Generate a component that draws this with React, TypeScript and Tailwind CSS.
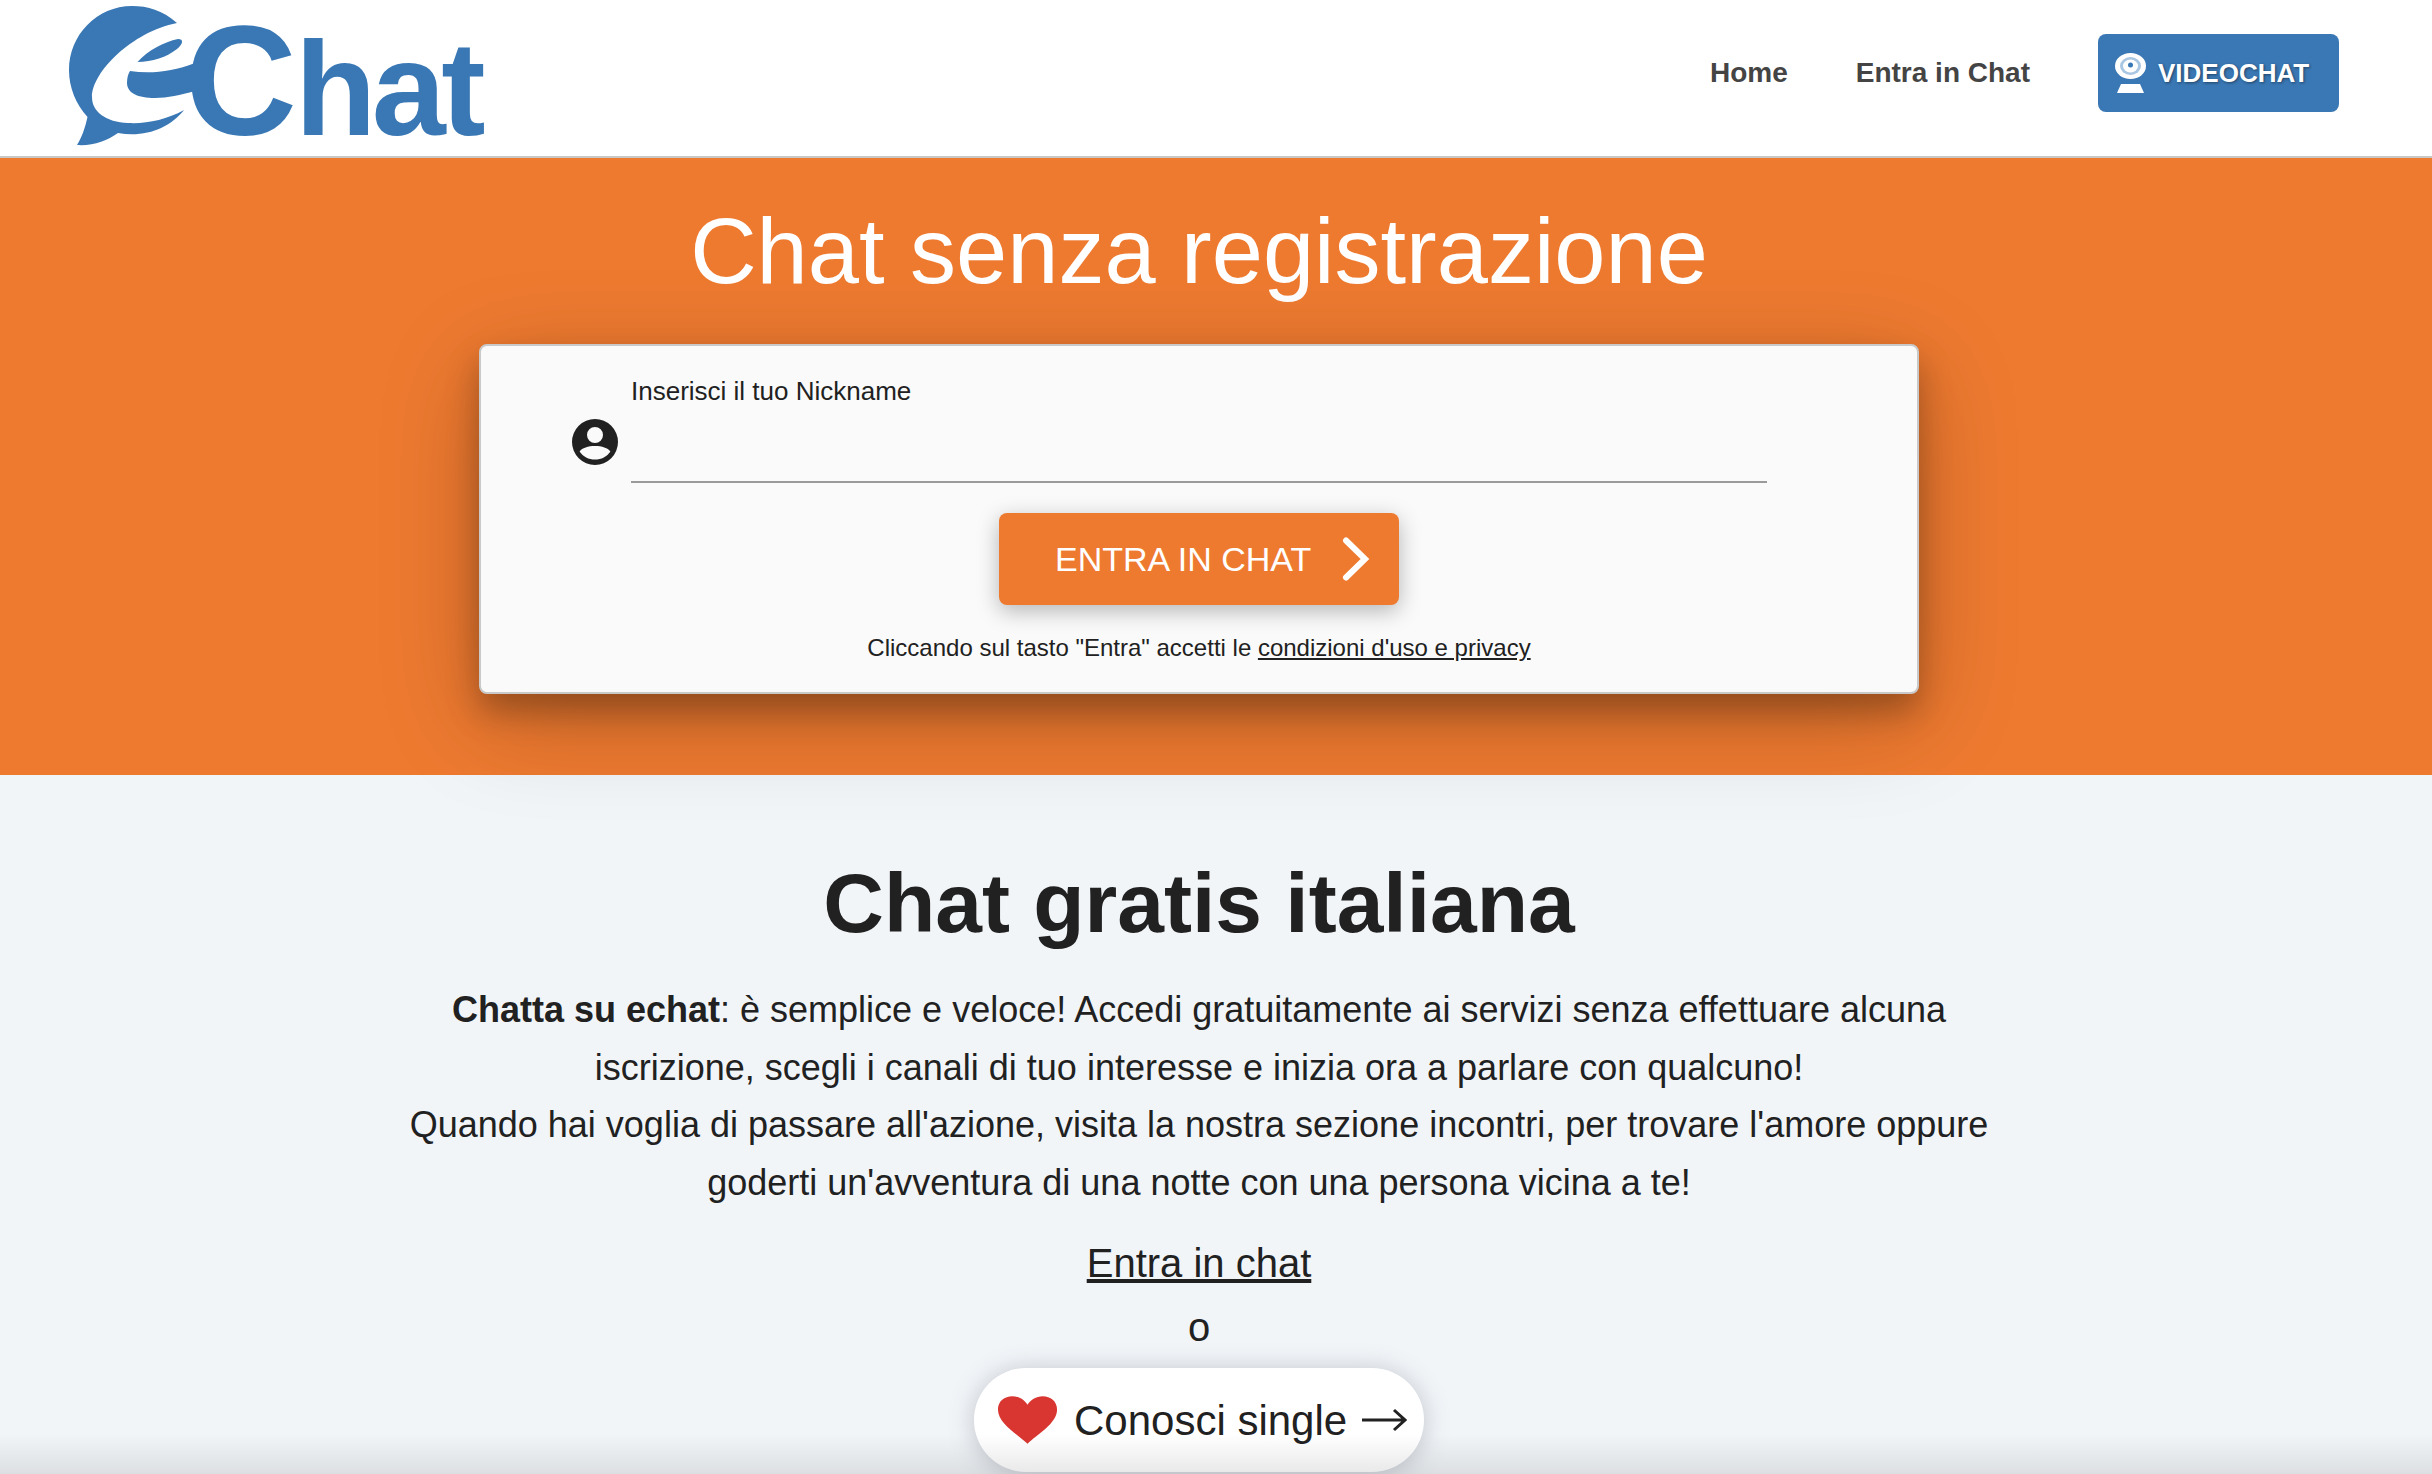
export default function App() {
  return (
    <div className="relative h-[1474px] w-full overflow-hidden bg-[#f2f5f8] font-['Liberation_Sans',Arial,sans-serif] text-[#212121]">
      <header className="flex h-[158px] items-start justify-between border-b-2 border-[#c8c8c8] bg-white pr-[93px]">
        <div className="relative h-[156px] w-[500px]" aria-label="eChat">
          <svg className="absolute left-0 top-0" width="200" height="156" viewBox="0 0 200 156" fill="#3a78b5">
            <path d="M177 23C162 10 148 6 132 6C97 6 69 35 69 70C69 88 76 104 87.500 117C85 128 82 137 77 145C93 146 107 141 118 133C145 138 170 128 184 110C166 120 146 124 128 123C106 122 92 112 92 97C92 72 132 32 177 23Z" />
            <path d="M137.500 62C148 50 164 42 178 39C184 39 183 44 177 49C167 57 152 62 137.500 62Z" />
            <path d="M130 71C150 74 172 72 195 63L195 91C180 95 168 98 155 98C138 98 127 93 127 83C127 78 128 74 130 71Z" />
          </svg>
          <span className="absolute left-[185px] top-[3px] text-[155px] font-bold leading-[155px] text-[#3a78b5]">C</span>
          <span className="absolute left-[295px] top-[23px] text-[133px] font-bold leading-[133px] tracking-[-4.500px] text-[#3a78b5]">hat</span>
        </div>
        <nav className="flex items-center gap-[68px] pt-[34px]">
          <a className="text-[28px] font-bold leading-[78px] text-[#444444]">Home</a>
          <a className="text-[28px] font-bold leading-[78px] text-[#444444]">Entra in Chat</a>
          <a className="flex h-[78px] w-[241px] items-center gap-[10px] rounded-[8px] bg-[#3a78b5] pl-[15px] text-[26px] font-bold text-white [text-shadow:1px_1px_3px_rgba(0,0,0,0.45)]">
            <svg width="35" height="42" viewBox="0 0 35 42" fill="none">
              <ellipse cx="17.500" cy="14" rx="15.500" ry="13" fill="#ffffff" />
              <ellipse cx="17.500" cy="14" rx="10.500" ry="9" fill="#a9c6e2" />
              <ellipse cx="17.500" cy="14" rx="7.500" ry="6.500" fill="#ffffff" />
              <circle cx="17.500" cy="13" r="2.500" fill="#3a78b5" />
              <path d="M8 32H27L31 41H4Z" fill="#ffffff" />
            </svg>
            VIDEOCHAT
          </a>
        </nav>
      </header>

      <section className="flex h-[617px] flex-col items-center bg-[#ee7a30] pr-[34px]">
        <h1 className="mt-[40px] text-[92px] leading-[106px] text-white">Chat senza registrazione</h1>
        <div className="relative z-10 mt-[40px] flex h-[350px] w-[1440px] flex-col items-center rounded-[8px] border-2 border-[#c9c9c9] bg-[#fafafa] shadow-[0_18px_32px_rgba(0,0,0,0.26),0_26px_100px_rgba(0,0,0,0.22)]">
          <div className="mr-[60px] mt-[30px] flex w-[1196px] items-end gap-[12px]">
            <svg className="mb-[17px]" width="48" height="48" viewBox="0 0 24 24" fill="#212121">
              <path d="M12 0.500A11.500 11.500 0 1 0 12 23.500A11.500 11.500 0 0 0 12 0.500ZM12 4.500A4 4 0 1 1 12 12.500A4 4 0 0 1 12 4.500ZM12 20.800C8.800 20.800 6 19.200 4.300 16.700C5.500 15 8.600 14 12 14C15.400 14 18.500 15 19.700 16.700C18 19.200 15.200 20.800 12 20.800Z" />
            </svg>
            <div className="flex h-[107px] w-[1136px] flex-col border-b-2 border-[#9a9a9a]">
              <label className="text-[26px] leading-[30px]">Inserisci il tuo Nickname</label>
            </div>
          </div>
          <button className="mt-[30px] flex h-[92px] w-[400px] items-center gap-[31px] rounded-[8px] bg-[#ee7a30] pl-[56px] text-[34px] text-white shadow-[0_6px_22px_rgba(0,0,0,0.28)]">
            ENTRA IN CHAT
            <svg width="28" height="44" viewBox="0 0 28 44" fill="none">
              <path d="M4 3.500L23 22L4 40.500" stroke="#ffffff" strokeWidth="6" strokeLinecap="round" strokeLinejoin="miter" />
            </svg>
          </button>
          <p className="mt-[28px] text-[24px] leading-[30px]">
            Cliccando sul tasto "Entra" accetti le <a className="underline">condizioni d'uso e privacy</a>
          </p>
        </div>
      </section>

      <section className="flex flex-col items-center pr-[34px] text-center">
        <h2 className="mt-[80px] text-[84px] font-bold leading-[96px]">Chat gratis italiana</h2>
        <p className="mt-[30px] w-[1640px] text-[36px] leading-[57.600px]">
          <b>Chatta su echat</b>: è semplice e veloce! Accedi gratuitamente ai servizi senza effettuare alcuna iscrizione, scegli i canali di tuo interesse e inizia ora a parlare con qualcuno!
          <br />
          Quando hai voglia di passare all'azione, visita la nostra sezione incontri, per trovare l'amore oppure goderti un'avventura di una notte con una persona vicina a te!
        </p>
        <a className="mt-[24px] text-[40px] leading-[56px] underline">Entra in chat</a>
        <span className="mt-[8px] text-[40px] leading-[56px]">o</span>
        <a className="mt-[13px] flex h-[104px] w-[450px] items-center rounded-full bg-white pl-[23px] text-[42px] shadow-[0_2px_26px_rgba(60,70,90,0.28)]">
          <svg width="61" height="50" viewBox="0 0 64 50" fill="#d93631">
            <path d="M32 50C22 40 1 29 1 14C1 5 8 0 16 0C23 0 29 4 32 9C35 4 41 0 48 0C56 0 63 5 63 14C63 29 42 40 32 50Z" />
          </svg>
          <span className="ml-[16px]">Conosci single</span>
          <svg className="ml-[14px]" width="46" height="26" viewBox="0 0 46 26" fill="none">
            <path d="M1 13H44M33 3L44 13L33 23" stroke="#212121" strokeWidth="3" />
          </svg>
        </a>
      </section>

      <div className="pointer-events-none absolute inset-x-0 bottom-0 h-[40px] bg-gradient-to-b from-transparent to-[rgba(0,0,0,0.09)]" />
    </div>
  );
}
